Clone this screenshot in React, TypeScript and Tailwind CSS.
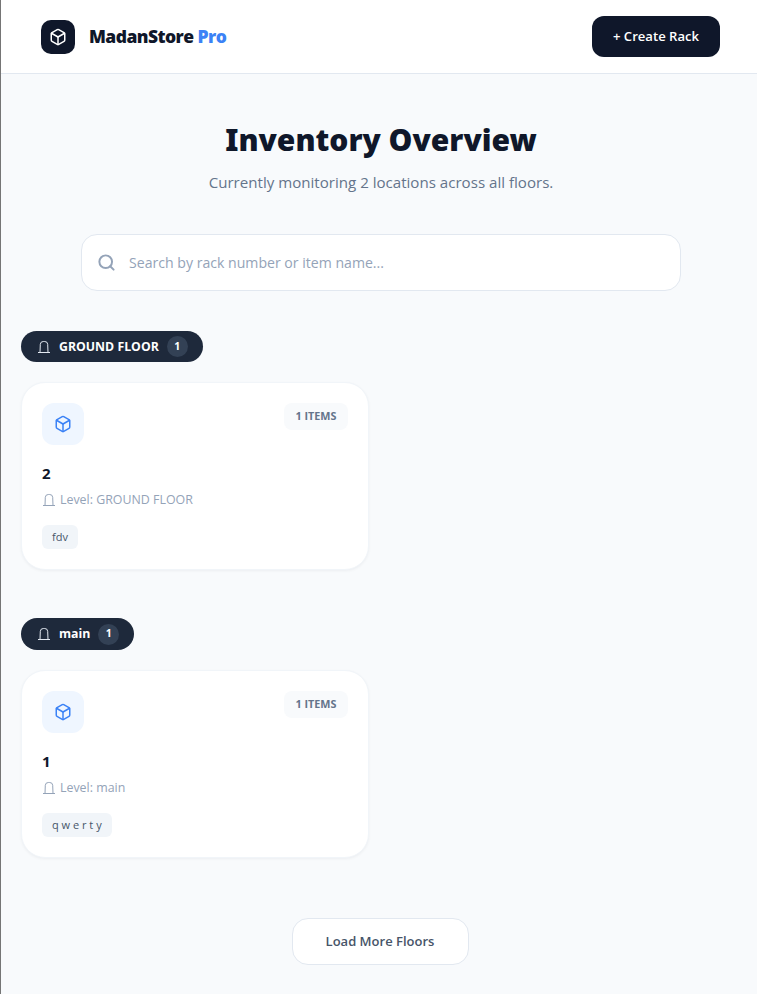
import { Box, Search } from "lucide-react";

const font = "font-['Open_Sans','Noto_Sans',sans-serif]";

function FloorIcon({ className }: { className: string }) {
  return (
    <svg viewBox="0 0 14 14" fill="none" stroke="currentColor" strokeWidth="1" className={className} aria-hidden>
      <path d="M1 12.5h12" />
      <path d="M3 12.5l.3-8.2a3 3 0 0 1 3-2.8h1.4a3 3 0 0 1 3 2.8l.3 8.2" />
    </svg>
  );
}

function FloorPill({ label, height }: { label: string; height: string }) {
  return (
    <div className={`${height} flex w-fit items-center rounded-full bg-[#1e293b] pl-[16px] pr-[15px] text-white`}>
      <FloorIcon className="h-[14px] w-[14px] text-[#e2e8f0]" />
      <span className="ml-[8px] pt-px text-[12.3px] font-bold">{label}</span>
      <span className="ml-[8px] flex h-[21px] w-[21px] items-center justify-center rounded-full bg-[#334155] text-[10.5px] font-bold">1</span>
    </div>
  );
}

function RackCard({ name, level, tag }: { name: string; level: string; tag: string }) {
  return (
    <div className="mt-[20px] w-[348px] rounded-[24px] border border-[#f1f5f9] bg-white px-[20px] pb-[20px] pt-[20px] shadow-[0_1px_3px_rgba(15,23,42,0.05)]">
      <div className="flex items-start justify-between">
        <div className="flex h-[42px] w-[42px] items-center justify-center rounded-[12px] bg-[#eff6ff]">
          <Box className="h-[18px] w-[18px] text-[#3b82f6]" strokeWidth={2} />
        </div>
        <span className="flex h-[27px] items-center rounded-[8px] bg-[#f8fafc] px-[11.5px] text-[10.8px] font-bold text-[#64748b]">1 ITEMS</span>
      </div>
      <p className="mt-[17px] text-[15px] font-bold leading-[22px] text-[#0f172a]">{name}</p>
      <p className="mt-[7px] flex items-center text-[12.4px] leading-[18px] text-[#94a3b8]">
        <FloorIcon className="mr-[4px] h-[14px] w-[14px]" />
        Level: {level}
      </p>
      <div className="mt-[16px] flex">
        <span className="flex h-[24px] items-center rounded-[6px] bg-[#f1f5f9] px-[10px] text-[11px] font-medium text-[#475569]">{tag}</span>
      </div>
    </div>
  );
}

export default function App() {
  return (
    <div className={`${font} min-h-[994px] border-l border-l-[#757575] bg-[#f8fafc]`}>
      <header className="flex h-[74px] items-center justify-between border-b border-b-[#e2e8f0] bg-white pl-[40px] pr-[37px]">
        <div className="flex items-center">
          <div className="flex h-[34px] w-[34px] items-center justify-center rounded-[10px] bg-[#0f172a]">
            <Box className="h-[18px] w-[18px] text-white" strokeWidth={2} />
          </div>
          <span className="ml-[14px] text-[17.5px] font-extrabold tracking-[-0.55px] text-[#0f172a]">
            MadanStore <span className="text-[#3b82f6]">Pro</span>
          </span>
        </div>
        <button className="h-[41px] w-[128px] rounded-[12px] bg-[#0f172a] pt-px text-[13.1px] font-semibold text-white">+ Create Rack</button>
      </header>

      <main className="pl-[20px] pr-[16px]">
        <h1 className="mt-[46px] text-center font-['Noto_Sans',sans-serif] text-[30px] font-black leading-[40px] text-[#0f172a]">Inventory Overview</h1>
        <p className="mt-[11px] text-center text-[15.1px] leading-[22px] text-[#64748b]">Currently monitoring 2 locations across all floors.</p>

        <div className="mx-auto mt-[41px] flex h-[57px] w-[600px] items-center rounded-[16px] border border-[#e2e8f0] bg-white pl-[15px]">
          <Search className="h-[19px] w-[19px] text-[#94a3b8]" strokeWidth={2.5} />
          <span className="ml-[13px] text-[14.1px] text-[#94a3b8]">Search by rack number or item name...</span>
        </div>

        <section className="mt-[40px]">
          <FloorPill label="GROUND FLOOR" height="h-[31px]" />
          <RackCard name="2" level="GROUND FLOOR" tag="fdv" />
        </section>
        <section className="mt-[48px]">
          <FloorPill label="main" height="h-[32px]" />
          <RackCard name="1" level="main" tag="q w e r t y" />
        </section>

        <div className="mt-[60px] flex justify-center pr-[2px]">
          <button className="h-[47px] w-[177px] rounded-[16px] border border-[#e2e8f0] bg-white pt-px text-[13px] font-semibold text-[#475569]">Load More Floors</button>
        </div>
      </main>
    </div>
  );
}
